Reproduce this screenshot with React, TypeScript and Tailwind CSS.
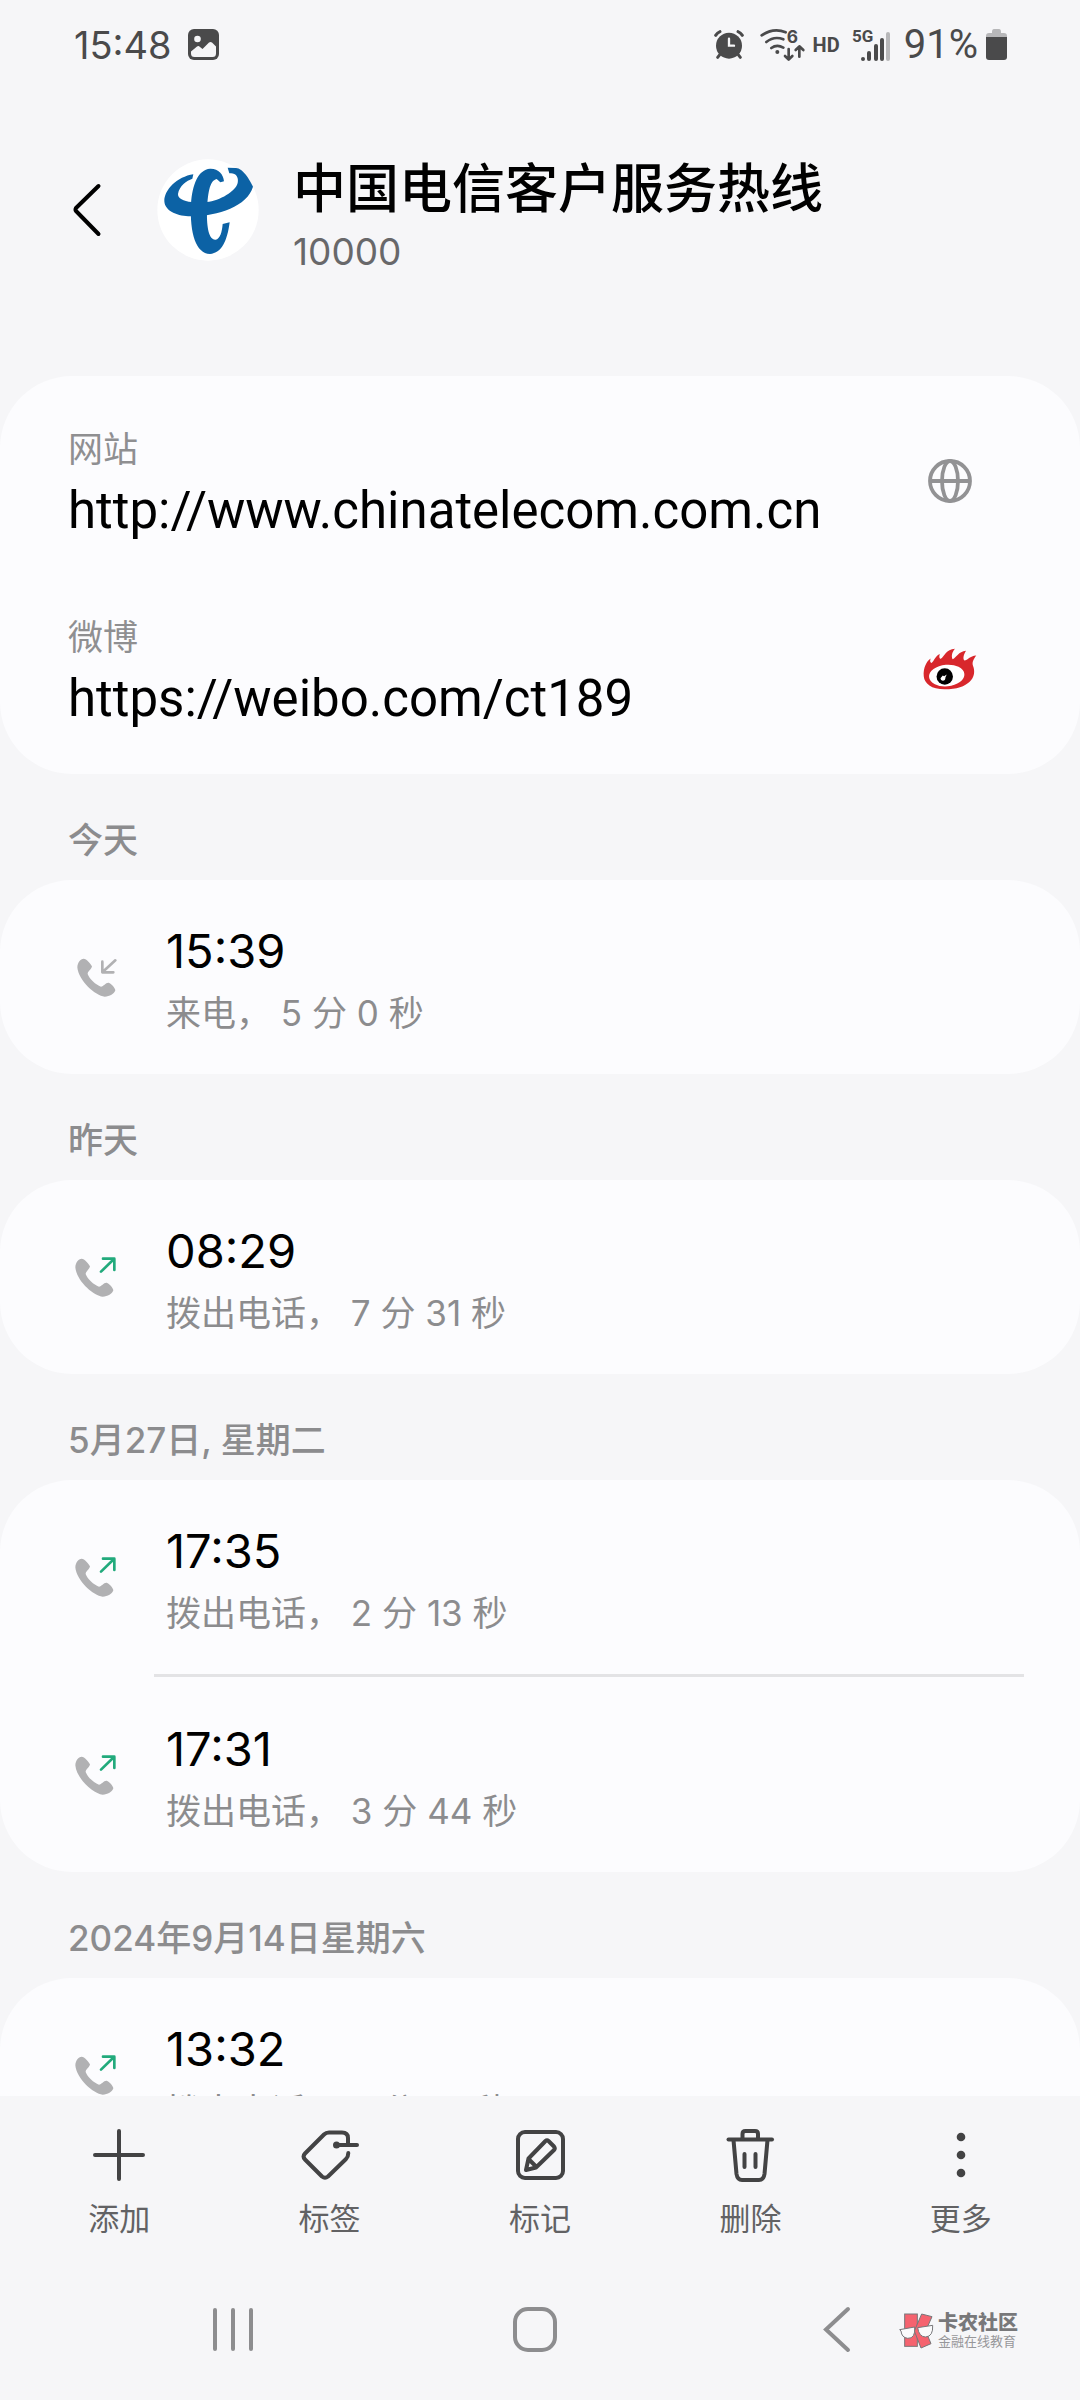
import type { ReactNode } from "react";

type Call = { time: string; detail: string; incoming?: boolean };
type Group = { day: string; calls: Call[] };

const groups: Group[] = [
  { day: "今天", calls: [{ time: "15:39", detail: "来电， 5 分 0 秒", incoming: true }] },
  { day: "昨天", calls: [{ time: "08:29", detail: "拨出电话， 7 分 31 秒" }] },
  {
    day: "5月27日, 星期二",
    calls: [
      { time: "17:35", detail: "拨出电话， 2 分 13 秒" },
      { time: "17:31", detail: "拨出电话， 3 分 44 秒" },
    ],
  },
  { day: "2024年9月14日星期六", calls: [{ time: "13:32", detail: "拨出电话， 2 分 14 秒" }] },
];

function StatusBar() {
  return (
    <div className="flex h-[90px] shrink-0 items-center justify-between pl-[74px] pr-[73px] text-[#4a4a4b]">
      <div className="flex items-center gap-4">
        <span className="text-[38px] leading-[48px]">15:48</span>
        <svg className="size-8" viewBox="0 0 32 32">
          <rect x="0" y="0" width="31" height="31" rx="6" fill="currentColor" />
          <circle cx="9.5" cy="10" r="3.3" fill="#f6f6f8" />
          <path d="M3 22.5 L9 17.5 Q10.5 16.5 12 18 L14.5 20 L21 13.5 Q22.5 12.3 24 13.5 L28 17.5 V24.5 Q28 28 24.5 28 H6.5 Q3 28 3 24.5 Z" fill="#f6f6f8" />
        </svg>
      </div>
      <div className="flex items-center">
        <svg className="h-8 w-[30px]" viewBox="74 92 90 96" fill="none" stroke="currentColor" strokeLinecap="round">
          <circle cx="119" cy="142" r="39" fill="currentColor" stroke="none" />
          <path d="M79 111 Q84 103 92 100 M159 111 Q154 103 146 100" strokeWidth="9" />
          <path d="M92 168 L85 177 M146 168 L153 177" strokeWidth="9" />
          <path d="M119 121 V142 H134" stroke="#f6f6f8" strokeWidth="7" />
        </svg>
        <svg className="ml-4 h-[34px] w-[45px] overflow-visible" viewBox="207 88 135 102" fill="none" stroke="currentColor" strokeWidth="8" strokeLinecap="round" strokeLinejoin="round">
          <path d="M212 110 Q248 86 284 101 M226 130 Q250 111 277 122 M241 148 Q258 136 277 147" />
          <circle cx="259" cy="160" r="6" fill="currentColor" stroke="none" />
          <path d="M293 151 V181 M282 172 L293 183 L304 172 M325 174 V144 M314 154 L325 143 L337 154" />
          <text x="287" y="132" fontSize="52" fontWeight="700" fill="currentColor" stroke="none">6</text>
        </svg>
        <span className="ml-2 font-[Roboto] text-[20px] font-bold leading-6">HD</span>
        <svg className="ml-3 h-8 w-10 overflow-visible font-[Roboto]" viewBox="0 0 40 32">
          <text x="0" y="13" fontSize="17" fontWeight="700" fill="currentColor">5G</text>
          <circle cx="11" cy="30" r="2" fill="currentColor" />
          <rect x="15" y="22" width="4" height="10" rx="2" fill="currentColor" />
          <rect x="22" y="15" width="4" height="17" rx="2" fill="currentColor" />
          <rect x="28" y="9" width="4" height="23" rx="2" fill="currentColor" />
          <rect x="34" y="3" width="4" height="29" rx="2" fill="#b7b7b9" />
        </svg>
        <span className="ml-3 font-[Roboto] text-[40px] leading-[48px]">91%</span>
        <svg className="ml-2 h-8 w-[21px]" viewBox="0 0 21 32">
          <path d="M6 3 Q6 0 8 0 H13 Q15 0 15 3 V4 H18 Q21 4 21 7 V10 H0 V7 Q0 4 3 4 H6 Z" fill="#b7b7b9" />
          <path d="M0 8 H21 V28 Q21 31 18 31 H3 Q0 31 0 28 Z" fill="currentColor" />
        </svg>
      </div>
    </div>
  );
}

function TelecomLogo() {
  return (
    <svg className="size-[102px]" viewBox="351 85 306 306">
      <circle cx="504" cy="238" r="152" fill="#ffffff" />
      <g fill="#0c62a5">
        <path d="M460 131 C412 138 372 178 373 212 C375 245 420 258 455 257 C535 256 622 226 639 168 C630 148 608 112 588 112 L563 111 L568 128 C586 125 597 138 593 157 C587 182 540 210 500 214 L455 214 C430 212 413 203 414 190 C418 165 440 150 457 144 Z" />
        <path d="M552 152 C550 130 535 113 510 114 C475 117 457 160 453 220 C449 310 468 368 510 370 C545 368 562 330 569 275 L548 280 C546 305 540 325 527 327 C507 329 500 290 501 245 C503 190 508 150 530 145 L541 155 Z" />
      </g>
    </svg>
  );
}

function GlobeIcon() {
  return (
    <svg className="size-11" viewBox="0 0 44 44" fill="none" stroke="#929294" strokeWidth="3.8">
      <circle cx="22" cy="22" r="20" />
      <ellipse cx="22" cy="22" rx="8" ry="20" />
      <path d="M2 22 H42" />
    </svg>
  );
}

function WeiboIcon() {
  return (
    <svg className="h-[42px] w-14" viewBox="188 684 168 128">
      <path
        d="M192 770 C190 745 200 725 213 716 C210 725 212 728 216 730 C224 722 228 707 241 702 C238 710 240 717 244 717 C255 708 260 689 287 686 C277 698 276 710 280 718 C292 712 297 695 321 692 C314 702 310 716 316 722 C326 722 332 708 352 707 C346 716 338 726 342 738 C356 772 330 810 256 810 C215 810 194 792 192 770 Z"
        fill="#d8272c"
      />
      <ellipse cx="262" cy="768" rx="54" ry="33" fill="#ffffff" transform="rotate(-5 262 768)" />
      <circle cx="256" cy="771" r="25" fill="#000000" />
      <path d="M243 776 L250 768 L254 770 L262 765 L258 774 Q258 784 250 784 Q243 783 243 776 Z" fill="#ffffff" />
    </svg>
  );
}

function CallIcon({ incoming }: { incoming?: boolean }) {
  return (
    <svg className="h-10 w-[42px] shrink-0" viewBox="104 409 126 120" fill="none" strokeWidth="8" strokeLinecap="round" strokeLinejoin="round">
      <path
        transform={incoming ? "translate(6 0)" : undefined}
        d="M105 440 C106 425 114 415 124 414 C132 414 146 430 149 437 C147 447 136 452 136 460 C142 476 160 492 176 498 C184 497 190 485 199 486 C207 489 219 502 219 509 C216 520 202 528 187 528 C160 526 108 480 105 440 Z"
        fill="#b1b1b3"
      />
      {incoming ? (
        <path d="M225 419 L187 454 M186 423 V455 H219" stroke="#b1b1b3" />
      ) : (
        <path d="M182 453 L221 415 M188 414 H222 V448" stroke="#22aa7c" />
      )}
    </svg>
  );
}

function InfoRow({ label, url, icon }: { label: string; url: string; icon: ReactNode }) {
  return (
    <a href={url} className="flex h-[188px] items-center justify-between pl-[68px] pr-[102px] font-['Roboto','Noto_Sans_CJK_SC',sans-serif]">
      <span className="flex flex-col pt-2">
        <span className="text-[35px] leading-[52px] text-[#8f8f91]">{label}</span>
        <span className="text-[51px] leading-[68px] text-black">{url}</span>
      </span>
      <span className="flex w-14 justify-center">{icon}</span>
    </a>
  );
}

function CallRow({ call }: { call: Call }) {
  return (
    <div className="flex h-[194px] items-center pl-[75px]">
      <CallIcon incoming={call.incoming} />
      <div className="ml-[49px] pt-1">
        <p className="text-[47px] leading-[68px] text-black">{call.time}</p>
        <p className="text-[35px] leading-[56px] text-[#8c8c8e]">{call.detail}</p>
      </div>
    </div>
  );
}

function ToolButton({ label, children }: { label: string; children: ReactNode }) {
  return (
    <button className="flex flex-1 flex-col items-center pt-[29px] text-[#434344]">
      <svg className="size-[60px]" viewBox="0 0 60 60" fill="none" stroke="currentColor" strokeWidth="4" strokeLinecap="round" strokeLinejoin="round">
        {children}
      </svg>
      <span className="mt-2 text-[31px] leading-[52px] text-[#626264]">{label}</span>
    </button>
  );
}

function Toolbar() {
  return (
    <div className="flex h-[160px] px-[14px]">
      <ToolButton label="添加">
        <path d="M30 6 V54 M6 30 H54" />
      </ToolButton>
      <ToolButton label="标签">
        <path d="M48 19 V13 Q48 7.5 42 7.5 H29 Q26 7.5 24 9.5 L5 28.5 Q2 31.5 5 34.5 L22 51.5 Q25 54 28 51.5 L46 34 Q48.3 31.5 48.3 28" />
        <path d="M37 20 H57" />
        <circle cx="36.5" cy="20" r="3.5" fill="currentColor" stroke="none" />
      </ToolButton>
      <ToolButton label="标记">
        <rect x="8" y="7" width="45" height="46" rx="7" />
        <path d="M16 45 L18.5 33.5 L35.5 16 Q37 14.5 38.5 16 L44 21.5 Q45.5 23.5 44 25 L26 42.5 Z M18.5 34 L26.5 42" />
      </ToolButton>
      <ToolButton label="删除">
        <path d="M8.5 14.5 H52" />
        <path d="M22.5 14 V9 Q22.5 6 25.5 6 H35 Q38 6 38 9 V14" />
        <path d="M13.5 15 L16.5 49 Q17.5 55 22 55 H39 Q43.5 55 44.5 49 L47.5 15" />
        <path d="M24.5 29 V42 M35.5 29 V42" />
      </ToolButton>
      <ToolButton label="更多">
        <g fill="currentColor" stroke="none">
          <circle cx="30" cy="12" r="4.3" />
          <circle cx="30" cy="30" r="4.3" />
          <circle cx="30" cy="48" r="4.3" />
        </g>
      </ToolButton>
    </div>
  );
}

function NavBar() {
  return (
    <nav className="relative flex h-[144px] pl-[82px] pr-[92px] text-[#8d8d8f]">
      <button aria-label="最近" className="flex flex-1 justify-center pt-[49px]">
        <svg className="size-12" viewBox="0 0 48 48" stroke="currentColor" strokeWidth="4" strokeLinecap="round">
          <path d="M6 5 V44 M24 5 V44 M42 5 V44" />
        </svg>
      </button>
      <button aria-label="主页" className="flex flex-1 justify-center pt-[49px]">
        <svg className="size-12" viewBox="0 0 48 48" fill="none" stroke="currentColor" strokeWidth="4">
          <rect x="4" y="4" width="40" height="41" rx="13" />
        </svg>
      </button>
      <button aria-label="返回" className="flex flex-1 justify-center pt-[49px]">
        <svg className="size-12" viewBox="0 0 48 48" fill="none" stroke="currentColor" strokeWidth="4" strokeLinecap="round">
          <path d="M35 4 L13 24.5 L35 45" />
        </svg>
      </button>
      <div className="absolute right-[62px] top-[56px] flex items-center gap-1">
        <svg className="h-[37px] w-[35px]" viewBox="900 665 105 111" stroke="#77777a" strokeWidth="3">
          <rect x="917" y="671" width="38" height="97" fill="#f5636f" />
          <path d="M968 671 L999 679 L980 722 L996 760 L966 773 L946 722 Z" fill="#f5636f" />
          <path d="M902 718 L947 710 Q950 745 926 744 Q908 742 906 722 Z" fill="#fafafb" />
          <path d="M956 712 L1001 705 Q1003 738 980 740 Q960 740 956 712 Z" fill="#fafafb" />
        </svg>
        <div>
          <p className="text-[20px] font-black leading-5 text-[#78787a]">卡农社区</p>
          <p className="text-[13px] leading-4 text-[#97979a]">金融在线教育</p>
        </div>
      </div>
    </nav>
  );
}

export default function App() {
  return (
    <div className="flex h-screen w-full flex-col overflow-hidden bg-[#f6f6f8] font-['Inter','Noto_Sans_CJK_SC',sans-serif]">
      <StatusBar />

      <header className="flex h-[286px] shrink-0 items-start pl-[70px] pt-[69px]">
        <button aria-label="返回" className="mt-[23px]">
          <svg className="h-14 w-9" viewBox="0 0 36 56" fill="none" stroke="#000000" strokeWidth="4" strokeLinecap="round" strokeLinejoin="round">
            <path d="M28.5 4 L6 26 Q5 28 6 29 L28.5 52" />
          </svg>
        </button>
        <div className="ml-[51px]">
          <TelecomLogo />
        </div>
        <div className="ml-[34px]">
          <h1 className="text-[53px] font-medium leading-[60px] text-black">中国电信客户服务热线</h1>
          <p className="mt-2 text-[37px] leading-[50px] text-[#68686a]">10000</p>
        </div>
      </header>

      <main className="min-h-0 flex-1 overflow-hidden">
        <section className="rounded-[72px] bg-[#fcfcfe] py-[11px]">
          <InfoRow label="网站" url="http://www.chinatelecom.com.cn" icon={<GlobeIcon />} />
          <InfoRow label="微博" url="https://weibo.com/ct189" icon={<WeiboIcon />} />
        </section>

        {groups.map((group) => (
          <section key={group.day}>
            <h2 className="h-[106px] pl-[68px] pt-10 text-[35px] font-medium leading-[52px] text-[#8c8c8e]">{group.day}</h2>
            <ul className="rounded-[72px] bg-[#fcfcfe]">
              {group.calls.map((call, i) => (
                <li key={call.time}>
                  {i > 0 && <div className="mb-px ml-[154px] mr-14 h-[3px] bg-[#e3e3e5]" />}
                  <CallRow call={call} />
                </li>
              ))}
            </ul>
          </section>
        ))}
      </main>

      <footer className="shrink-0">
        <Toolbar />
        <NavBar />
      </footer>
    </div>
  );
}
